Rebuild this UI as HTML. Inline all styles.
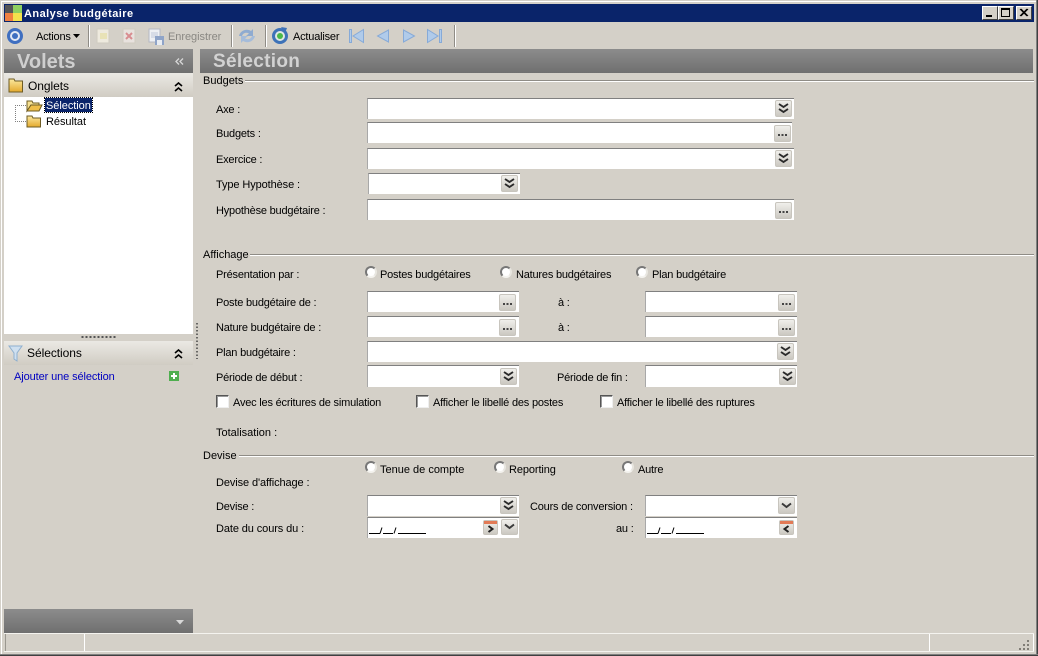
<!DOCTYPE html>
<html lang="fr"><head><meta charset="utf-8"><title>Analyse budgétaire</title>
<style>
html,body{margin:0;padding:0;background:#d4d0c8}
body{width:1038px;height:656px;position:relative;overflow:hidden;font:11px/13px "Liberation Sans",sans-serif;color:#000}
div,span.a,svg{position:absolute}
.t{white-space:nowrap;height:13px;margin-top:1px;letter-spacing:-.2px}
.g{left:203px;height:13px;white-space:nowrap;margin-top:1px}
.i{background:#fff;border-top:1px solid #808080;border-left:1px solid #a8a8a8;box-sizing:border-box}
.b{width:17px;height:17px;box-sizing:border-box;border:1px solid #c8c5be;border-radius:2px;background:linear-gradient(#f0efeb,#cbc8c1)}
.h{background:linear-gradient(#8c8c8c,#6f6f6f)}
.s{background:linear-gradient(#ebe9e4,#d0ccc3)}
.l{height:1px;background:#8f8c86;box-shadow:0 1px 0 #fff}
.r{width:12px;height:12px;border-radius:50%;background:#fff;box-sizing:border-box;border:2px solid;border-color:#777 #e8e6e0 #f4f3ef #777}
.c{width:13px;height:13px;background:#fff;box-sizing:border-box;border:1px solid;border-color:#555 #eee #eee #555;box-shadow:inset 1px 1px 0 #999}
.wb{width:16px;height:14px;top:6px;box-sizing:border-box;background:#d4d0c8;border:1px solid;border-color:#fff #404040 #404040 #fff}
.sep{width:1px;height:22px;top:25px;background:#8f8c86;box-shadow:1px 0 0 #fff}
</style></head><body>

<!-- frame -->
<div style="left:0;top:0;width:1038px;height:1px;background:#d4d0c8"></div>
<div style="left:1px;top:1px;width:1035px;height:1px;background:#fff"></div>
<div style="left:1px;top:1px;width:1px;height:653px;background:#fff"></div>
<div style="left:1036px;top:0;width:1px;height:656px;background:#808080"></div>
<div style="left:1037px;top:0;width:1px;height:656px;background:#404040"></div>
<div style="left:0;top:654px;width:1038px;height:1px;background:#808080"></div>
<div style="left:0;top:655px;width:1038px;height:1px;background:#404040"></div>

<!-- title bar -->
<div style="left:4px;top:4px;width:1030px;height:18px;background:#0a246a"></div>
<div style="left:5px;top:5px;width:8px;height:8px;background:#555"></div>
<div style="left:13px;top:5px;width:9px;height:8px;background:#8fd060"></div>
<div style="left:5px;top:13px;width:8px;height:8px;background:#f08040"></div>
<div style="left:13px;top:13px;width:9px;height:8px;background:#f4e24c"></div>
<div class="t" style="left:24px;top:7px;color:#fff;font-weight:bold;letter-spacing:.45px">Analyse budgétaire</div>
<div class="wb" style="left:982px"><div style="left:3px;top:8px;width:6px;height:2px;background:#000"></div></div>
<div class="wb" style="left:998px"><div style="left:2px;top:1px;width:9px;height:9px;box-sizing:border-box;border:1px solid #000;border-top-width:2px"></div></div>
<div class="wb" style="left:1016px"><svg width="14" height="12" style="left:0;top:0"><path d="M3 2l7 7M4 2l7 7M10 2l-7 7M11 2l-7 7" stroke="#000" fill="none"/></svg></div>

<!-- toolbar -->
<svg width="20" height="20" style="left:5px;top:26px"><circle cx="10" cy="10" r="6.500" fill="#e4e9f4" stroke="#3f6fc0" stroke-width="3"/><circle cx="10" cy="10" r="3" fill="#3f6fc0"/></svg>
<div class="t" style="left:36px;top:30px">Actions</div>
<svg width="8" height="5" style="left:73px;top:34px"><path d="M0 0h7l-3.500 4z" fill="#000"/></svg>
<div class="sep" style="left:88px"></div>
<svg width="16" height="16" style="left:95px;top:28px"><rect x="2" y="1" width="12" height="14" fill="#eeeade" stroke="#cfcbc0"/><path d="M5 6h7M5 8h7M5 10h7" stroke="#e3d98e"/></svg>
<svg width="16" height="16" style="left:121px;top:28px"><rect x="2" y="1" width="12" height="14" fill="#e8e2de" stroke="#cfcbc0"/><path d="M5 5l6 6M11 5l-6 6" stroke="#d88c90" stroke-width="2"/></svg>
<svg width="18" height="18" style="left:148px;top:28px"><rect x="1" y="1" width="11" height="13" fill="#eef0f4" stroke="#b4b8c4"/><path d="M3 5h7M3 7h7M3 9h7" stroke="#c0c8da"/><rect x="7" y="8" width="9" height="9" fill="#8fa4c8"/><rect x="9" y="12" width="5" height="5" fill="#e8ecf2"/></svg>
<div class="t" style="left:168px;top:30px;color:#8a8883;letter-spacing:-.05px">Enregistrer</div>
<div class="sep" style="left:231px"></div>
<svg width="18" height="18" style="left:238px;top:27px"><path d="M1 9C2 4 8 1 13 4l2-2v7H8l3-2.500C8 5 5 6 4 9z" fill="#8fabd0"/><path d="M17 9c-1 5-7 8-12 5l-2 2V9h7l-3 2.500c3 1.500 6 .5 7-2.500z" fill="#a5bcda"/></svg>
<div class="sep" style="left:265px"></div>
<svg width="18" height="18" style="left:271px;top:27px"><circle cx="9" cy="9" r="6.500" fill="#dfe8e2" stroke="#3d72b8" stroke-width="3"/><circle cx="9" cy="9" r="3" fill="#48b848"/><path d="M10 0l6 1-2 5z" fill="#3d72b8"/></svg>
<div class="t" style="left:293px;top:30px">Actualiser</div>
<svg width="110" height="16" style="left:348px;top:28px"><g fill="#b0cbea" stroke="#86aad8"><path d="M1.500 1.500v13h2v-13zM15.500 1.500v13L5 8z"/><path d="M40.500 2v12l-11-6z"/><path d="M55.500 2v12l11-6z"/><path d="M79.500 1.500v13L90 8zM91.500 1.500v13h2v-13z"/></g></svg>
<div class="sep" style="left:454px"></div>

<!-- left panel -->
<div class="h" style="left:4px;top:49px;width:189px;height:24px"></div>
<div class="t" style="left:17px;top:51px;height:20px;font:bold 20px/20px 'Liberation Sans',sans-serif;color:#cfcfcf;letter-spacing:0">Volets</div>
<svg width="10" height="10" style="left:175px;top:57px"><path d="M4 1.500l-3 3 3 3M8 1.500l-3 3 3 3" stroke="#d8d8d8" fill="none" stroke-width="1.300"/></svg>
<div class="s" style="left:4px;top:73px;width:189px;height:24px"></div>
<svg width="16" height="15" style="left:8px;top:78px"><defs><linearGradient id="fo" x1="0" y1="0" x2="0" y2="1"><stop offset="0" stop-color="#fbe9a0"/><stop offset="1" stop-color="#e4a92c"/></linearGradient></defs><path d="M1 1h5l1 2h7.500v11H1z" fill="url(#fo)" stroke="#6e5c24"/></svg>
<div class="t" style="left:28px;top:79px;font-size:12px;letter-spacing:-.05px">Onglets</div>
<svg width="10" height="10" style="left:174px;top:82px"><path d="M1 4l3.500-3 3.500 3M1 9l3.500-3 3.500 3" stroke="#000" fill="none" stroke-width="1.600"/></svg>
<div style="left:4px;top:97px;width:189px;height:237px;background:#fff"></div>
<svg width="14" height="20" style="left:15px;top:105px"><path d="M.5 0v16M0 .5h12M0 16.500h12" stroke="#808080" stroke-dasharray="1 1" fill="none"/></svg>
<svg width="18" height="14" style="left:26px;top:99px"><path d="M1 12V2h5l1 2h6v2H5z" fill="#f6e090" stroke="#6e5c24"/><path d="M1 12l4-6h11l-3 6z" fill="#efbe48" stroke="#6e5c24"/></svg>
<svg width="16" height="13" style="left:26px;top:115px"><path d="M1 1h5l1 2h7.500v9H1z" fill="url(#fo)" stroke="#6e5c24"/></svg>
<div style="left:45px;top:98px;width:47px;height:14px;background:#0a246a;outline:1px dotted #000"></div>
<div class="t" style="left:46px;top:99px;color:#fff;letter-spacing:-.05px">Sélection</div>
<div class="t" style="left:46px;top:115px;letter-spacing:-.05px">Résultat</div>
<svg width="36" height="3" style="left:81px;top:336px"><path d="M.5 1h35" stroke="#555" stroke-dasharray="2 2" stroke-width="2"/></svg>
<div class="s" style="left:4px;top:341px;width:189px;height:24px"></div>
<svg width="16" height="17" style="left:8px;top:345px"><path d="M1 1h13L9 8v8l-3-2V8z" fill="#cfe0f0" stroke="#8fb0cf"/></svg>
<div class="t" style="left:27px;top:346px;font-size:12px;letter-spacing:-.05px">Sélections</div>
<svg width="10" height="10" style="left:174px;top:349px"><path d="M1 4l3.500-3 3.500 3M1 9l3.500-3 3.500 3" stroke="#000" fill="none" stroke-width="1.600"/></svg>
<div class="t" style="left:14px;top:370px;color:#0000c0;letter-spacing:-.1px">Ajouter une sélection</div>
<svg width="10" height="10" style="left:169px;top:371px"><rect width="10" height="10" fill="#4fae4f"/><path d="M5 2v6M2 5h6" stroke="#fff" stroke-width="2"/></svg>
<svg width="2" height="36" style="left:196px;top:323px"><path d="M1 0v36" stroke="#444" stroke-dasharray="1.500 2" stroke-width="1.500"/></svg>
<div class="h" style="left:4px;top:609px;width:189px;height:24px"></div>
<svg width="9" height="6" style="left:176px;top:620px"><path d="M0 0h8l-4 4.500z" fill="#d8d8d8"/></svg>

<!-- status bar -->
<div style="left:4px;top:633px;width:1030px;height:1px;background:#f4f3ef"></div>
<div style="left:4px;top:651px;width:1030px;height:1px;background:#f4f3ef"></div>
<div style="left:5px;top:634px;width:1px;height:17px;background:#9a978f"></div>
<div style="left:84px;top:634px;width:1px;height:17px;background:#fff"></div>
<div style="left:929px;top:634px;width:1px;height:17px;background:#fff"></div>
<div style="left:1033px;top:634px;width:1px;height:17px;background:#fff"></div>
<svg width="12" height="12" style="left:1018px;top:639px"><path d="M9 1h2v2H9zM5 5h2v2H5zM9 5h2v2H9zM1 9h2v2H1zM5 9h2v2H5zM9 9h2v2H9z" fill="#807d76"/></svg>

<!-- right header -->
<div class="h" style="left:200px;top:49px;width:833px;height:24px"></div>
<div class="t" style="left:213px;top:51px;height:20px;font:bold 19px/20px 'Liberation Sans',sans-serif;color:#d2d2d2;letter-spacing:.3px">Sélection</div>

<!-- groups -->
<div class="g" style="top:74px">Budgets</div><div class="l" style="left:245px;top:80px;width:789px"></div>
<div class="g" style="top:248px">Affichage</div><div class="l" style="left:250px;top:254px;width:784px"></div>
<div class="g" style="top:449px">Devise</div><div class="l" style="left:239px;top:455px;width:795px"></div>

<!-- labels -->
<div class="t" style="left:216px;top:103px">Axe :</div>
<div class="t" style="left:216px;top:127px">Budgets :</div>
<div class="t" style="left:216px;top:153px">Exercice :</div>
<div class="t" style="left:216px;top:178px;letter-spacing:-.1px">Type Hypothèse :</div>
<div class="t" style="left:216px;top:204px">Hypothèse budgétaire :</div>
<div class="t" style="left:216px;top:268px">Présentation par :</div>
<div class="t" style="left:216px;top:296px">Poste budgétaire de :</div>
<div class="t" style="left:216px;top:321px">Nature budgétaire de :</div>
<div class="t" style="left:216px;top:346px">Plan budgétaire :</div>
<div class="t" style="left:216px;top:371px">Période de début :</div>
<div class="t" style="left:216px;top:426px;letter-spacing:0">Totalisation :</div>
<div class="t" style="left:216px;top:476px;letter-spacing:-.1px">Devise d'affichage :</div>
<div class="t" style="left:216px;top:500px">Devise :</div>
<div class="t" style="left:216px;top:522px;letter-spacing:-.1px">Date du cours du :</div>
<div class="t" style="left:558px;top:296px">à :</div>
<div class="t" style="left:558px;top:321px">à :</div>
<div class="t" style="left:557px;top:371px">Période de fin :</div>
<div class="t" style="left:530px;top:500px">Cours de conversion :</div>
<div class="t" style="left:616px;top:522px">au :</div>

<!-- inputs -->
<div class="i" style="left:367px;top:98px;width:427px;height:21px"></div>
<div class="i" style="left:367px;top:122px;width:425px;height:21px"></div>
<div class="i" style="left:367px;top:148px;width:427px;height:21px"></div>
<div class="i" style="left:368px;top:173px;width:152px;height:21px"></div>
<div class="i" style="left:367px;top:199px;width:427px;height:21px"></div>
<div class="i" style="left:367px;top:291px;width:152px;height:21px"></div>
<div class="i" style="left:645px;top:291px;width:152px;height:21px"></div>
<div class="i" style="left:367px;top:316px;width:152px;height:21px"></div>
<div class="i" style="left:645px;top:316px;width:152px;height:21px"></div>
<div class="i" style="left:367px;top:341px;width:430px;height:21px"></div>
<div class="i" style="left:367px;top:365px;width:152px;height:22px"></div>
<div class="i" style="left:645px;top:365px;width:152px;height:22px"></div>
<div class="i" style="left:367px;top:495px;width:152px;height:21px"></div>
<div class="i" style="left:645px;top:495px;width:152px;height:21px"></div>
<div class="i" style="left:367px;top:517px;width:152px;height:21px"></div>
<div class="i" style="left:645px;top:517px;width:152px;height:21px"></div>

<!-- double-chevron buttons -->
<svg width="0" height="0"><defs>
<g id="dc"><path d="M4 4l4.500 3 4.500-3M4 9l4.500 3 4.500-3" stroke="#2a2a2a" fill="none" stroke-width="1.900"/></g>
<g id="sc"><path d="M4 6.500l4.500 3.500 4.500-3.500" stroke="#3a3a3a" fill="none" stroke-width="1.900"/></g>
<g id="dd"><path d="M4 9h2v2H4zM7.500 9h2v2h-2zM11 9h2v2h-2z" fill="#444"/></g>
</defs></svg>
<div class="b" style="left:775px;top:100px"><svg width="17" height="17" style="left:-1px;top:-1px"><use href="#dc"/></svg></div>
<div class="b" style="left:775px;top:150px"><svg width="17" height="17" style="left:-1px;top:-1px"><use href="#dc"/></svg></div>
<div class="b" style="left:501px;top:175px"><svg width="17" height="17" style="left:-1px;top:-1px"><use href="#dc"/></svg></div>
<div class="b" style="left:777px;top:343px"><svg width="17" height="17" style="left:-1px;top:-1px"><use href="#dc"/></svg></div>
<div class="b" style="left:500px;top:368px"><svg width="17" height="17" style="left:-1px;top:-1px"><use href="#dc"/></svg></div>
<div class="b" style="left:779px;top:368px"><svg width="17" height="17" style="left:-1px;top:-1px"><use href="#dc"/></svg></div>
<div class="b" style="left:500px;top:497px"><svg width="17" height="17" style="left:-1px;top:-1px"><use href="#dc"/></svg></div>
<div class="b" style="left:778px;top:497px"><svg width="17" height="17" style="left:-1px;top:-1px"><use href="#sc"/></svg></div>
<div class="b" style="left:501px;top:519px;height:16px"><svg width="17" height="16" style="left:-1px;top:-2px"><use href="#sc"/></svg></div>

<!-- ellipsis buttons -->
<div class="b" style="left:774px;top:125px"><svg width="17" height="17" style="left:-1px;top:-1px"><use href="#dd"/></svg></div>
<div class="b" style="left:775px;top:202px"><svg width="17" height="17" style="left:-1px;top:-1px"><use href="#dd"/></svg></div>
<div class="b" style="left:499px;top:294px"><svg width="17" height="17" style="left:-1px;top:-1px"><use href="#dd"/></svg></div>
<div class="b" style="left:778px;top:294px"><svg width="17" height="17" style="left:-1px;top:-1px"><use href="#dd"/></svg></div>
<div class="b" style="left:499px;top:319px"><svg width="17" height="17" style="left:-1px;top:-1px"><use href="#dd"/></svg></div>
<div class="b" style="left:778px;top:319px"><svg width="17" height="17" style="left:-1px;top:-1px"><use href="#dd"/></svg></div>

<!-- calendar buttons -->
<div class="b" style="left:483px;top:520px;width:15px;height:15px"><div style="left:0;top:0;width:13px;height:3px;background:#e27a56"></div><svg width="13" height="13" style="left:0;top:0"><path d="M4.500 5l4 3-4 3" stroke="#222" fill="none" stroke-width="2"/></svg></div>
<div class="b" style="left:779px;top:520px;width:15px;height:15px"><div style="left:0;top:0;width:13px;height:3px;background:#e27a56"></div><svg width="13" height="13" style="left:0;top:0"><path d="M8.500 5l-4 3 4 3" stroke="#222" fill="none" stroke-width="2"/></svg></div>

<!-- date masks -->
<svg width="60" height="14" style="left:368px;top:521px"><path d="M1 12.500h11M15 12.500h10M30 12.500h28M12 12.500l2-6M26 12.500l2-6" stroke="#000" fill="none"/></svg>
<svg width="60" height="14" style="left:646px;top:521px"><path d="M1 12.500h11M15 12.500h10M30 12.500h28M12 12.500l2-6M26 12.500l2-6" stroke="#000" fill="none"/></svg>

<!-- radios -->
<div class="r" style="left:365px;top:266px"></div><div class="t" style="left:380px;top:268px">Postes budgétaires</div>
<div class="r" style="left:500px;top:266px"></div><div class="t" style="left:516px;top:268px">Natures budgétaires</div>
<div class="r" style="left:636px;top:266px"></div><div class="t" style="left:652px;top:268px">Plan budgétaire</div>
<div class="r" style="left:365px;top:461px"></div><div class="t" style="left:380px;top:463px;letter-spacing:0">Tenue de compte</div>
<div class="r" style="left:494px;top:461px"></div><div class="t" style="left:509px;top:463px;letter-spacing:-.1px">Reporting</div>
<div class="r" style="left:622px;top:461px"></div><div class="t" style="left:638px;top:463px">Autre</div>

<!-- checkboxes -->
<div class="c" style="left:216px;top:395px"></div><div class="t" style="left:233px;top:396px">Avec les écritures de simulation</div>
<div class="c" style="left:416px;top:395px"></div><div class="t" style="left:433px;top:396px">Afficher le libellé des postes</div>
<div class="c" style="left:600px;top:395px"></div><div class="t" style="left:617px;top:396px">Afficher le libellé des ruptures</div>
</body></html>
